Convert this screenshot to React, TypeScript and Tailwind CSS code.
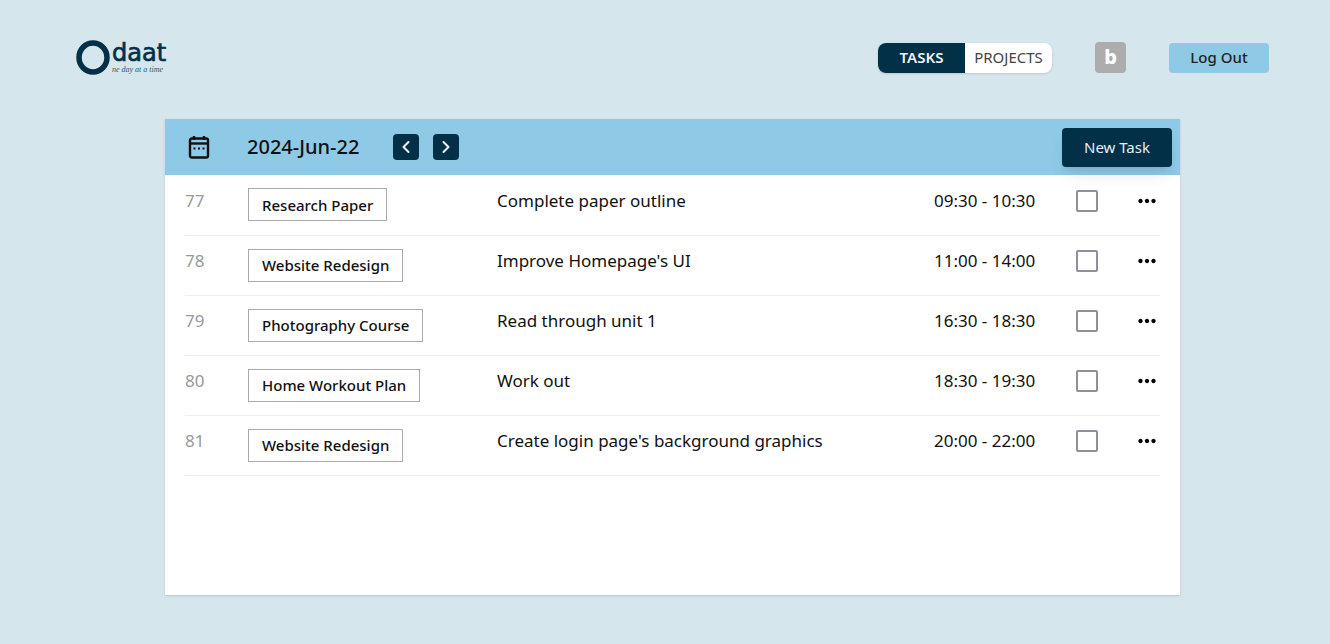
import { ChevronLeft, ChevronRight } from "lucide-react";
import { MdMoreHoriz } from "react-icons/md";

const tasks = [
  { id: 77, project: "Research Paper", name: "Complete paper outline", time: "09:30 - 10:30" },
  { id: 78, project: "Website Redesign", name: "Improve Homepage's UI", time: "11:00 - 14:00" },
  { id: 79, project: "Photography Course", name: "Read through unit 1", time: "16:30 - 18:30" },
  { id: 80, project: "Home Workout Plan", name: "Work out", time: "18:30 - 19:30" },
  { id: 81, project: "Website Redesign", name: "Create login page's background graphics", time: "20:00 - 22:00" },
];

function Logo() {
  return (
    <a href="#" aria-label="Odaat home" className="flex text-[#023047]">
      <svg width="96" height="42" viewBox="0 0 96 42" fill="none">
        <ellipse cx="18" cy="20.500" rx="14" ry="14.500" stroke="currentColor" strokeWidth="5.500" />
        <text
          x="37"
          y="24"
          fill="currentColor"
          stroke="currentColor"
          strokeWidth="0.7"
          fontSize="24"
          fontFamily="'DejaVu Sans', sans-serif"
        >
          daat
        </text>
        <text x="37" y="35" fill="currentColor" opacity="0.8" fontSize="8" fontStyle="italic" fontFamily="'Liberation Serif', serif">
          ne day at a time
        </text>
      </svg>
    </a>
  );
}

function CalendarIcon() {
  return (
    <svg width="26" height="26" viewBox="0 0 26 26" fill="none" stroke="currentColor" aria-hidden="true">
      <rect x="4" y="4.500" width="18" height="19" rx="1.800" strokeWidth="2.400" />
      <path d="M4 9.500h18" strokeWidth="2.400" />
      <path d="M8 2v4M18 2v4" strokeWidth="2.400" />
      <path d="M7.500 14.500h2M12 14.500h2M16.500 14.500h2" strokeWidth="2" />
    </svg>
  );
}

function Header() {
  return (
    <header className="flex h-[115px] items-center justify-between">
      <Logo />
      <div className="flex items-center gap-[43px]">
        <nav className="flex h-[30px] overflow-hidden rounded-lg bg-white text-[15px] shadow-sm">
          <a href="#tasks" className="flex w-[87px] items-center justify-center bg-[#023047] font-semibold text-[#eef4f7]">
            TASKS
          </a>
          <a href="#projects" className="flex w-[87px] items-center justify-center text-[#444]">
            PROJECTS
          </a>
        </nav>
        <button
          type="button"
          aria-label="Profile"
          className="flex size-[31px] items-center justify-center rounded bg-[#adadad] pb-0.5 text-xl font-extrabold text-white"
        >
          b
        </button>
        <button type="button" className="h-[30px] w-[100px] rounded bg-[#8ecae6] text-[15px] font-medium text-[#222]">
          Log Out
        </button>
      </div>
    </header>
  );
}

function DayBar() {
  return (
    <div className="flex h-14 items-center bg-[#8ecae6] pl-[21px] pr-2">
      <button type="button" aria-label="Choose date" className="text-[#111]">
        <CalendarIcon />
      </button>
      <h1 className="ml-[35px] w-[146px] text-xl font-medium text-[#111]">2024-Jun-22</h1>
      <div className="flex gap-[14px] text-[#e8eef1]">
        <button type="button" aria-label="Previous day" className="flex size-[26px] items-center justify-center rounded bg-[#023047]">
          <ChevronLeft size={20} strokeWidth={2.5} />
        </button>
        <button type="button" aria-label="Next day" className="flex size-[26px] items-center justify-center rounded bg-[#023047]">
          <ChevronRight size={20} strokeWidth={2.5} />
        </button>
      </div>
      <button type="button" className="ml-auto h-[39px] w-[110px] rounded bg-[#023047] text-[15px] text-[#e8eef1] shadow-lg">
        New Task
      </button>
    </div>
  );
}

function TaskTable() {
  return (
    <div className="px-5">
      <table className="w-full table-fixed border-collapse text-left text-[17px] text-[#111]">
        <colgroup>
          <col className="w-[63px]" />
          <col className="w-[249px]" />
          <col />
          <col className="w-[142px]" />
          <col className="w-[58px]" />
          <col className="w-[26px]" />
        </colgroup>
        <tbody>
          {tasks.map((task) => (
            <tr key={task.id} className="h-[60px] border-b border-[#eee]">
              <td className="pb-2 text-[#999]">{task.id}</td>
              <td>
                <span className="inline-flex h-[33px] items-center border border-[#aaa] px-[13px] text-[15px] font-medium">
                  {task.project}
                </span>
              </td>
              <td className="pb-2">{task.name}</td>
              <td className="pb-2">{task.time}</td>
              <td className="pb-2">
                <input
                  type="checkbox"
                  aria-label={`Mark ${task.name} as done`}
                  className="block size-[22px] appearance-none rounded-xs border-2 border-[#8f8f9d] bg-white checked:bg-[#023047]"
                />
              </td>
              <td className="pb-2">
                <button type="button" aria-label={`Options for ${task.name}`} className="block text-black">
                  <MdMoreHoriz size={26} />
                </button>
              </td>
            </tr>
          ))}
        </tbody>
      </table>
    </div>
  );
}

export default function App() {
  return (
    <div className="flex min-h-screen flex-col bg-[#d5e6ec] pb-[49px] pl-[75px] pr-[61px] font-['Noto_Sans',sans-serif]">
      <Header />
      <main className="ml-[90px] mr-[89px] mt-1 flex-1 bg-white shadow-sm">
        <DayBar />
        <TaskTable />
      </main>
    </div>
  );
}
